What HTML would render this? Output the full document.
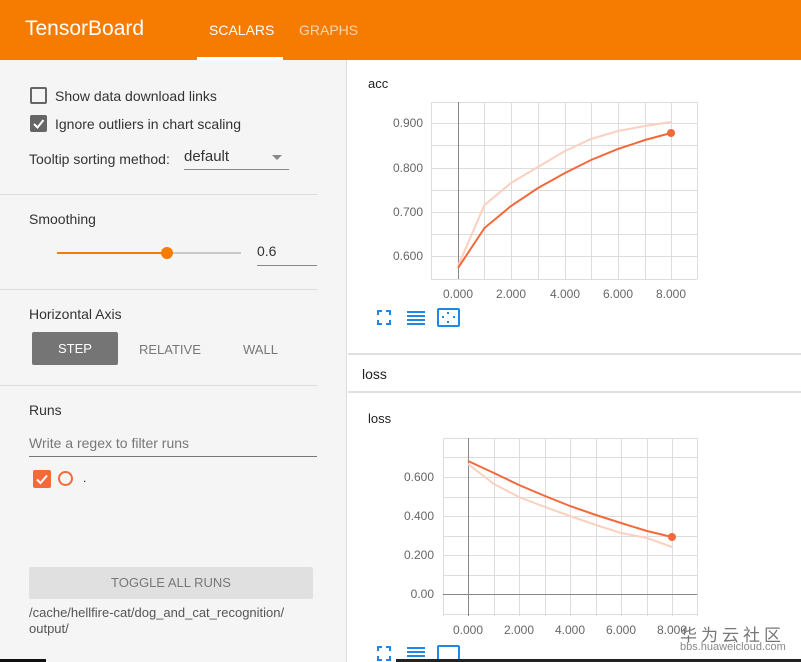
<!DOCTYPE html>
<html><head><meta charset="utf-8"><style>
*{margin:0;padding:0;box-sizing:border-box}
body{width:801px;height:662px;overflow:hidden;font-family:"Liberation Sans",sans-serif;background:#fff;position:relative;color:#212121}
.hdr{position:absolute;left:0;top:0;width:801px;height:60px;background:#f57c00}
.abs{position:absolute;white-space:nowrap}
.left{position:absolute;left:0;top:60px;width:347px;height:602px;background:#f5f5f5;border-right:1px solid #ddd}
.hr{position:absolute;left:0;width:317px;height:1px;background:#dcdcdc}
.t14{font-size:14px;color:#333}
.ax{font-size:12px;fill:#666;font-family:"Liberation Sans",sans-serif}
</style></head><body>
<div class="hdr"></div>
<div class="abs" style="left:25px;top:17px;font-size:21px;color:#fff">TensorBoard</div>
<div class="abs" style="left:209px;top:22px;font-size:14px;color:#fff">SCALARS</div>
<div class="abs" style="left:299px;top:22px;font-size:14px;color:#fbd3a8">GRAPHS</div>
<div class="abs" style="left:197px;top:57px;width:86px;height:3px;background:#fff"></div>

<div class="left"></div>
<div class="abs" style="left:30px;top:87px;width:17px;height:17px;border:2px solid #666;border-radius:2px"></div>
<div class="abs t14" style="left:55px;top:88px">Show data download links</div>
<div class="abs" style="left:30px;top:115px;width:17px;height:17px;background:#666;border-radius:2px"></div>
<svg class="abs" style="left:30px;top:115px" width="17" height="17"><path d="M4 9 L7.5 12.5 L13.5 5" stroke="#fff" stroke-width="2" fill="none"/></svg>
<div class="abs t14" style="left:55px;top:116px">Ignore outliers in chart scaling</div>
<div class="abs t14" style="left:29px;top:151px">Tooltip sorting method:</div>
<div class="abs" style="left:184px;top:148px;font-size:15px;color:#333">default</div>
<div class="abs" style="left:272px;top:155px;border:5px solid transparent;border-top-color:#888;border-bottom:0"></div>
<div class="abs" style="left:184px;top:169px;width:105px;height:1px;background:#888"></div>
<div class="hr" style="top:194px"></div>
<div class="abs t14" style="left:29px;top:211px">Smoothing</div>
<div class="abs" style="left:57px;top:252px;width:110px;height:2px;background:#f57c00"></div>
<div class="abs" style="left:167px;top:252px;width:74px;height:2px;background:#c8c8c8"></div>
<div class="abs" style="left:161px;top:247px;width:12px;height:12px;border-radius:50%;background:#f57c00"></div>
<div class="abs t14" style="left:257px;top:243px">0.6</div>
<div class="abs" style="left:257px;top:265px;width:60px;height:1px;background:#888"></div>
<div class="hr" style="top:289px"></div>
<div class="abs t14" style="left:29px;top:306px">Horizontal Axis</div>
<div class="abs" style="left:32px;top:332px;width:86px;height:33px;background:#757575;border-radius:2px;color:#fff;font-size:13px;text-align:center;line-height:33px">STEP</div>
<div class="abs" style="left:139px;top:342px;font-size:13px;color:#777">RELATIVE</div>
<div class="abs" style="left:243px;top:342px;font-size:13px;color:#777">WALL</div>
<div class="hr" style="top:385px"></div>
<div class="abs t14" style="left:29px;top:402px">Runs</div>
<div class="abs" style="left:29px;top:435px;font-size:14px;color:#777">Write a regex to filter runs</div>
<div class="abs" style="left:29px;top:456px;width:288px;height:1px;background:#777"></div>
<div class="abs" style="left:33px;top:470px;width:18px;height:18px;background:#f4693a;border-radius:2px"></div>
<svg class="abs" style="left:33px;top:470px" width="18" height="18"><path d="M4 9.5 L7.5 13 L14 5.5" stroke="#fff" stroke-width="2" fill="none"/></svg>
<div class="abs" style="left:58px;top:471px;width:15px;height:15px;border:2px solid #f4693a;border-radius:50%"></div>
<div class="abs" style="left:83px;top:471px;font-size:12px">.</div>
<div class="abs" style="left:29px;top:567px;width:284px;height:32px;background:#e0e0e0;border-radius:2px;text-align:center;line-height:32px;font-size:13px;color:#777">TOGGLE ALL RUNS</div>
<div class="abs" style="left:29px;top:605px;font-size:13px;color:#555;line-height:16px">/cache/hellfire-cat/dog_and_cat_recognition/<br>output/</div>

<div class="abs" style="left:368px;top:76px;font-size:13px">acc</div>
<svg class="abs" style="left:0;top:0" width="801" height="662">
<g stroke="#ddd" stroke-width="1">
<path d="M431.5 102V279M484.5 102V279M511.5 102V279M538.5 102V279M565.5 102V279M591.5 102V279M618.5 102V279M645.5 102V279M671.5 102V279M697.5 102V279"/>
<path d="M431 102.5H697M431 123.5H697M431 145.5H697M431 168.5H697M431 190.5H697M431 212.5H697M431 234.5H697M431 256.5H697M431 279.5H697"/>
</g>
<path d="M458.5 102V279" stroke="#888"/>
<path d="M458 266 L484.5 205 L511 183 L538 167 L565 151 L591 139 L618 131 L645 126 L671 122" stroke="#fbd0c0" stroke-width="2" fill="none"/>
<path d="M458 268 L484.5 228 L511 206 L538 188 L565 173 L591 160 L618 149 L645 140 L671 133" stroke="#f4693a" stroke-width="2" fill="none"/>
<circle cx="671" cy="133" r="4" fill="#f4693a"/>
<text class="ax" x="423" y="127" text-anchor="end">0.900</text>
<text class="ax" x="423" y="172" text-anchor="end">0.800</text>
<text class="ax" x="423" y="216" text-anchor="end">0.700</text>
<text class="ax" x="423" y="260" text-anchor="end">0.600</text>
<text class="ax" x="458" y="298" text-anchor="middle">0.000</text>
<text class="ax" x="511" y="298" text-anchor="middle">2.000</text>
<text class="ax" x="565" y="298" text-anchor="middle">4.000</text>
<text class="ax" x="618" y="298" text-anchor="middle">6.000</text>
<text class="ax" x="671" y="298" text-anchor="middle">8.000</text>
<g fill="none" stroke="#1e88e5" stroke-width="2">
<path d="M378 315V311H382M386 311H390V315M390 320V324H386M382 324H378V320"/>
<path d="M407 312H425M407 316H425M407 320H425M407 324H425"/>
<rect x="438" y="309" width="21" height="17" rx="1"/>
</g>
<g fill="#1e88e5"><rect x="447" y="312" width="2" height="2"/><rect x="447" y="321" width="2" height="2"/><rect x="442" y="316" width="2" height="2"/><rect x="453" y="316" width="2" height="2"/></g>
<g stroke="#ddd" stroke-width="1">
<path d="M443.5 438V616M494.5 438V616M519.5 438V616M545.5 438V616M570.5 438V616M596.5 438V616M621.5 438V616M647.5 438V616M672.5 438V616M697.5 438V616"/>
<path d="M443 438.5H697M443 457.5H697M443 477.5H697M443 497.5H697M443 516.5H697M443 536.5H697M443 555.5H697M443 575.5H697M443 614.5H697"/>
</g>
<path d="M468.5 438V616" stroke="#888"/><path d="M443 594.5H697" stroke="#888"/>
<path d="M468 464 L494 484 L519 497 L545 507 L570 516 L596 525 L621 533 L647 538 L672 547" stroke="#fbd0c0" stroke-width="2" fill="none"/>
<path d="M468 461 L494 473 L519 485 L545 496 L570 506 L596 515 L621 523 L647 531 L672 537" stroke="#f4693a" stroke-width="2" fill="none"/>
<circle cx="672" cy="537" r="4" fill="#f4693a"/>
<text class="ax" x="434" y="481" text-anchor="end">0.600</text>
<text class="ax" x="434" y="520" text-anchor="end">0.400</text>
<text class="ax" x="434" y="559" text-anchor="end">0.200</text>
<text class="ax" x="434" y="598" text-anchor="end">0.00</text>
<text class="ax" x="468" y="634" text-anchor="middle">0.000</text>
<text class="ax" x="519" y="634" text-anchor="middle">2.000</text>
<text class="ax" x="570" y="634" text-anchor="middle">4.000</text>
<text class="ax" x="621" y="634" text-anchor="middle">6.000</text>
<text class="ax" x="672" y="634" text-anchor="middle">8.000</text>
<g fill="none" stroke="#1e88e5" stroke-width="2">
<path d="M378 651V647H382M386 647H390V651M390 656V660H386M382 660H378V656"/>
<path d="M407 648H425M407 652H425M407 656H425M407 660H425"/>
<rect x="438" y="646" width="21" height="17" rx="1"/>
</g>
</svg>
<div class="abs" style="left:348px;top:353px;width:453px;height:2px;background:#e0e0e0"></div>
<div class="abs" style="left:348px;top:391px;width:453px;height:2px;background:#e0e0e0"></div>
<div class="abs" style="left:362px;top:366px;font-size:14px">loss</div>
<div class="abs" style="left:368px;top:411px;font-size:13px">loss</div>
<div class="abs" style="left:680px;top:621px;font-size:17px;color:#777;letter-spacing:4px;font-family:'Liberation Sans','Noto Sans CJK SC',sans-serif">华为云社区</div>
<div class="abs" style="left:680px;top:641px;font-size:11px;color:#888">bbs.huaweicloud.com</div>
<div class="abs" style="left:0;top:659px;width:46px;height:3px;background:#111"></div>
<div class="abs" style="left:396px;top:659px;width:405px;height:3px;background:#222"></div>
</body></html>
